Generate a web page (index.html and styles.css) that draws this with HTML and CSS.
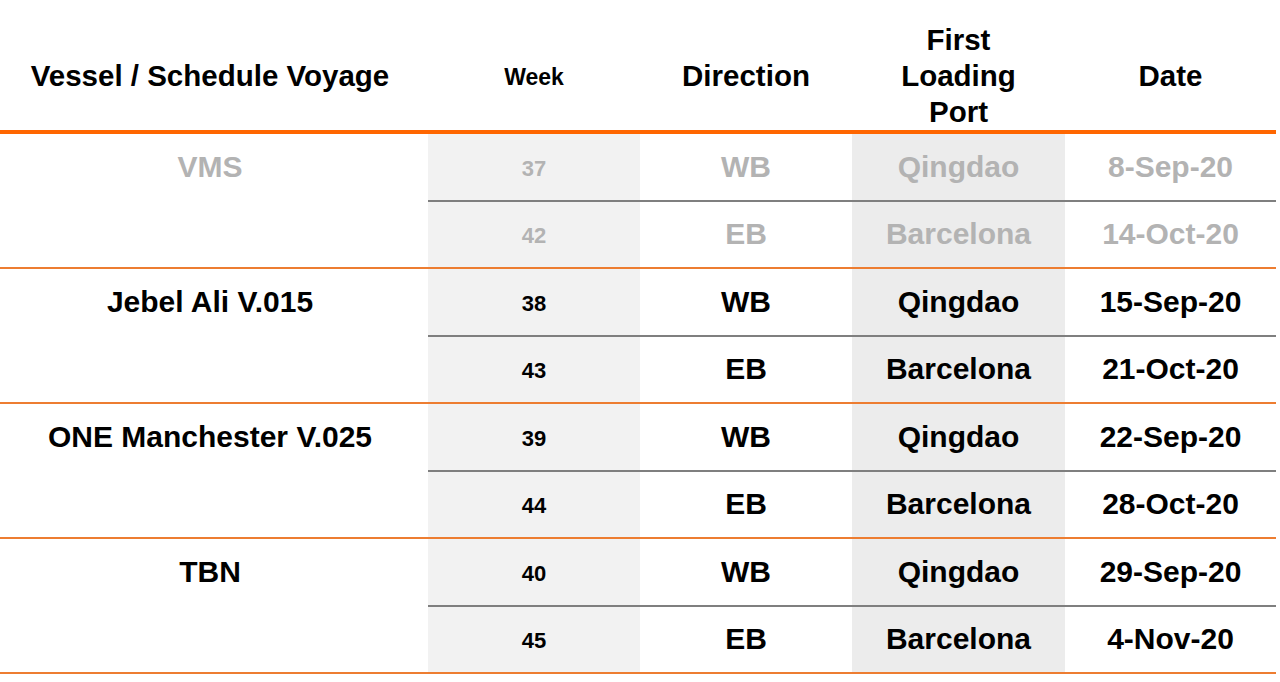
FILE: index.html
```html
<!DOCTYPE html>
<html>
<head>
<meta charset="utf-8">
<link rel="stylesheet" href="styles.css">
</head>
<body>
<div class="table">
  <div class="head">
    <div class="hc c-vessel">Vessel / Schedule Voyage</div>
    <div class="hc c-week small">Week</div>
    <div class="hc c-dir">Direction</div>
    <div class="hc c-port">First<br>Loading<br>Port</div>
    <div class="hc c-date">Date</div>
  </div>

  <div class="group muted">
    <div class="vessel">VMS</div>
    <div class="rows">
      <div class="row first">
        <div class="cell week">37</div><div class="cell dir">WB</div><div class="cell port">Qingdao</div><div class="cell date">8-Sep-20</div>
      </div>
      <div class="row">
        <div class="cell week">42</div><div class="cell dir">EB</div><div class="cell port">Barcelona</div><div class="cell date">14-Oct-20</div>
      </div>
    </div>
  </div>

  <div class="group">
    <div class="vessel">Jebel Ali V.015</div>
    <div class="rows">
      <div class="row first">
        <div class="cell week">38</div><div class="cell dir">WB</div><div class="cell port">Qingdao</div><div class="cell date">15-Sep-20</div>
      </div>
      <div class="row">
        <div class="cell week">43</div><div class="cell dir">EB</div><div class="cell port">Barcelona</div><div class="cell date">21-Oct-20</div>
      </div>
    </div>
  </div>

  <div class="group">
    <div class="vessel">ONE Manchester V.025</div>
    <div class="rows">
      <div class="row first">
        <div class="cell week">39</div><div class="cell dir">WB</div><div class="cell port">Qingdao</div><div class="cell date">22-Sep-20</div>
      </div>
      <div class="row">
        <div class="cell week">44</div><div class="cell dir">EB</div><div class="cell port">Barcelona</div><div class="cell date">28-Oct-20</div>
      </div>
    </div>
  </div>

  <div class="group">
    <div class="vessel">TBN</div>
    <div class="rows">
      <div class="row first">
        <div class="cell week">40</div><div class="cell dir">WB</div><div class="cell port">Qingdao</div><div class="cell date">29-Sep-20</div>
      </div>
      <div class="row">
        <div class="cell week">45</div><div class="cell dir">EB</div><div class="cell port">Barcelona</div><div class="cell date">4-Nov-20</div>
      </div>
    </div>
  </div>
</div>
</body>
</html>
```

FILE: styles.css
```css
html, body {
  margin: 0;
  padding: 0;
  background: #ffffff;
}

body {
  font-family: "Liberation Sans", Arial, sans-serif;
  font-weight: bold;
  color: #000000;
}

.table {
  width: 1276px;
}

.head {
  display: flex;
  height: 130px;
  border-bottom: 4px solid #ff6600;
}

.hc {
  display: flex;
  align-items: center;
  justify-content: center;
  text-align: center;
  box-sizing: border-box;
  padding-top: 22px;
  font-size: 29.5px;
  line-height: 36px;
}

.hc.small {
  font-size: 23px;
  padding-top: 24px;
}

.c-vessel { width: 428px; padding-right: 8px; }
.c-week { width: 212px; }
.c-dir { width: 212px; }
.c-port { width: 213px; }
.c-date { width: 211px; }

.group {
  display: flex;
  border-bottom: 2px solid #ed7d31;
}

.vessel {
  width: 428px;
  height: 65.5px;
  display: flex;
  align-items: center;
  justify-content: center;
  font-size: 30px;
  padding-right: 8px;
  box-sizing: border-box;
}

.rows {
  flex: 1;
  display: flex;
  flex-direction: column;
}

.row {
  display: flex;
  height: 65.5px;
}

.row.first {
  border-bottom: 2px solid #7f7f7f;
}

.cell {
  display: flex;
  align-items: center;
  justify-content: center;
  font-size: 30px;
}

.cell.week {
  width: 212px;
  background: #f2f2f2;
  font-size: 22px;
  padding-top: 4px;
  box-sizing: border-box;
}

.cell.dir { width: 212px; }

.cell.port {
  width: 213px;
  background: #ececec;
}

.cell.date { width: 211px; }

.muted {
  color: #b3b3b3;
}
```
